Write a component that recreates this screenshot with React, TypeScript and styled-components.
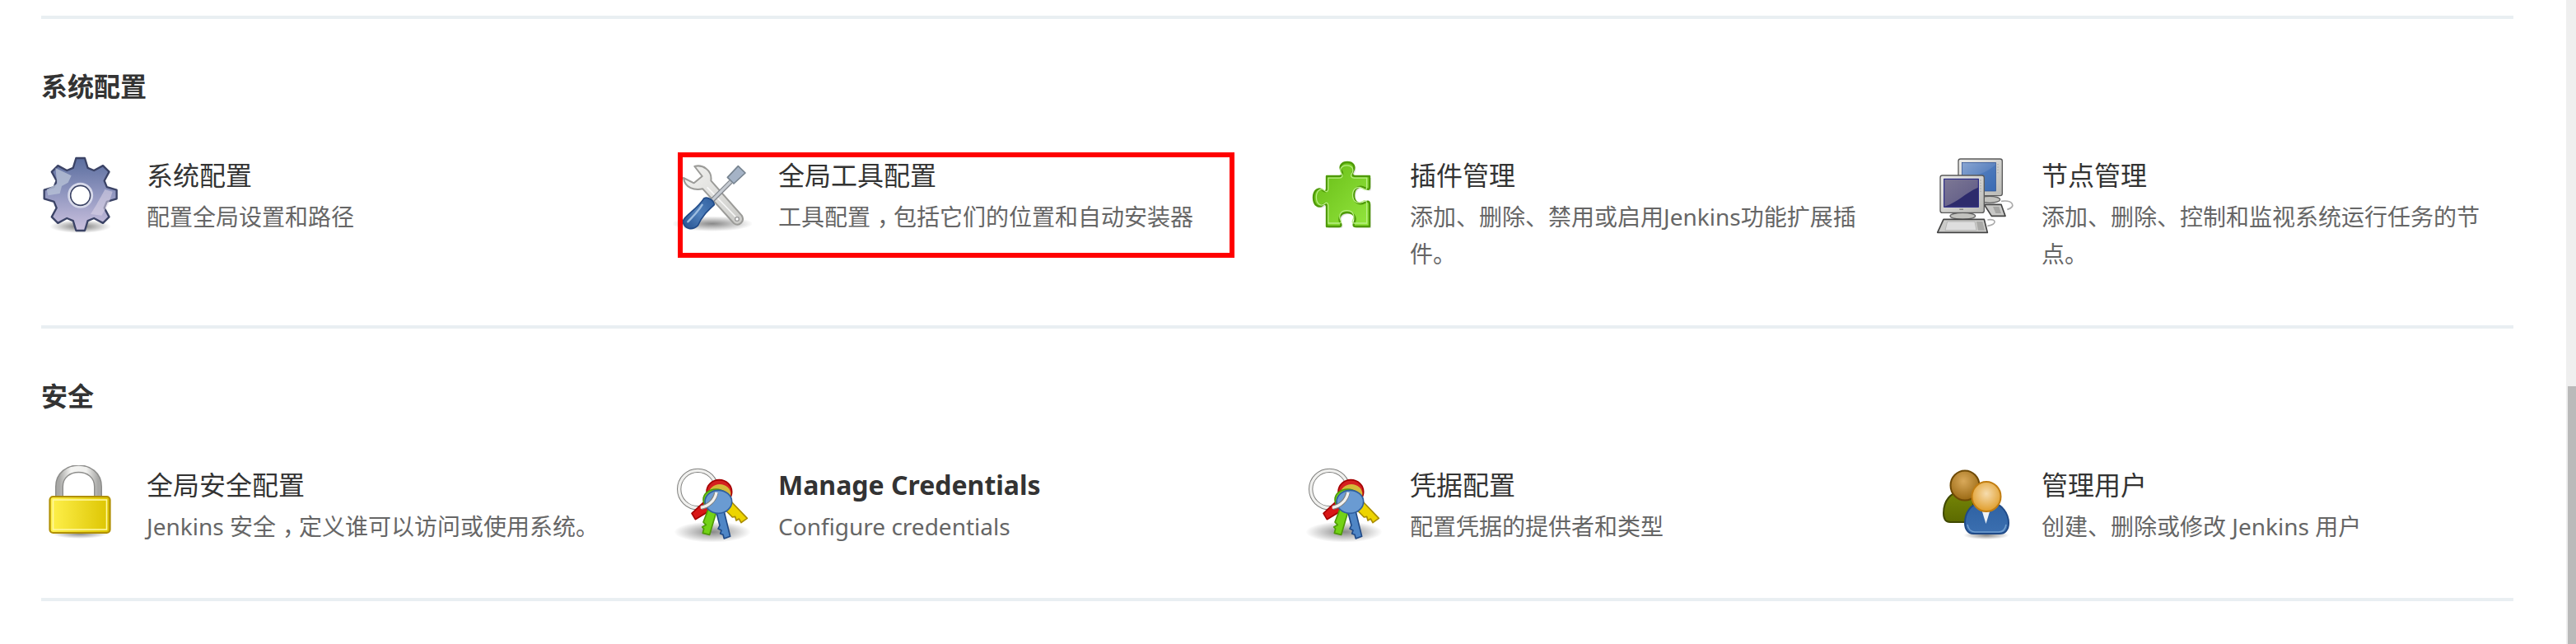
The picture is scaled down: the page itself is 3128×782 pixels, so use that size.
import React from "react";
import styled, { createGlobalStyle } from "styled-components";

const GlobalStyle = createGlobalStyle`
  html, body {
    margin: 0;
    padding: 0;
    background: #fff;
    overflow: hidden;
  }
  body {
    font-family: "Noto Sans", "Noto Sans CJK SC", sans-serif;
    color: #333;
  }
`;

const Page = styled.div`
  display: flex;
  width: 3128px;
  height: 782px;
  overflow: hidden;
`;

const Main = styled.main`
  flex: 1;
  min-width: 0;
  padding: 19px 64px 0 50px;
`;

const Sections = styled.div`
  border-top: 4px solid #e9eff2;
`;

const Section = styled.section`
  padding: 56px 0 64px;
  border-bottom: 4px solid #e9eff2;
`;

const SectionTitle = styled.h2`
  margin: 0 0 57px;
  font-size: 32px;
  line-height: 51px;
  font-weight: 700;
  color: #333;
`;

const Grid = styled.div`
  display: grid;
  grid-template-columns: repeat(4, 701px);
  column-gap: 66px;
`;

const Item = styled.a`
  position: relative;
  display: grid;
  grid-template-columns: 128px 1fr;
  padding-right: 23px;
`;

const IconBox = styled.div`
  width: 96px;
  height: 96px;
  margin-top: 2px;
  svg {
    display: block;
    width: 96px;
    height: 96px;
  }
`;

const ItemTitle = styled.div<{ $latin?: boolean }>`
  font-size: 32px;
  line-height: 51px;
  font-weight: ${({ $latin }) => ($latin ? 700 : 400)};
  color: #333;
`;

const ItemDesc = styled.div`
  margin-top: 3px;
  font-size: 28px;
  line-height: 45px;
  color: #666;
`;

// the comma sits in the middle of its cell in the reference's font
const FullComma = styled.span`
  padding-left: 8px;
  letter-spacing: -8px;
`;

const Highlight = styled.div`
  position: absolute;
  left: 6px;
  top: -2px;
  width: 676px;
  height: 128px;
  box-sizing: border-box;
  border: 6px solid #ff0000;
`;

const ScrollTrack = styled.div`
  flex: none;
  width: 12px;
  height: 782px;
  box-sizing: border-box;
  padding: 469px 0 0 2px;
  background: #efefef;
`;

const ScrollThumb = styled.div`
  height: 100%;
  background: #bababa;
`;

const gearPath = (cx: number, cy: number) => {
  const teeth = 8;
  const outer = 133;
  const root = 100;
  const pts: string[] = [];
  const pt = (r: number, a: number) =>
    `${(cx + r * Math.sin(a)).toFixed(1)} ${(cy - r * Math.cos(a)).toFixed(1)}`;
  for (let i = 0; i < teeth; i++) {
    const a = (i * 2 * Math.PI) / teeth;
    pts.push(pt(root, a - 0.27), pt(outer, a - 0.12), pt(outer, a + 0.12), pt(root, a + 0.27));
  }
  return `M${pts.join(" L")} Z`;
};

const GearIcon = () => (
  <svg viewBox="60 27 288 288">
    <defs>
      <radialGradient id="gearShadow">
        <stop offset="0" stopColor="#777" />
        <stop offset="1" stopColor="#777" stopOpacity="0" />
      </radialGradient>
      <linearGradient id="gearFill" x1="0" y1="0" x2="0" y2="1">
        <stop offset="0" stopColor="#5a6d9e" />
        <stop offset="0.45" stopColor="#8c93bd" />
        <stop offset="1" stopColor="#cbc1de" />
      </linearGradient>
    </defs>
    <ellipse cx="203" cy="285" rx="112" ry="24" fill="url(#gearShadow)" />
    <path d={gearPath(203, 168)} fill="url(#gearFill)" stroke="#3b4366" strokeWidth="7" strokeLinejoin="round" />
    <path
      d="M112 72 L170 100 L158 125 L135 138 L128 165 L85 172 L80 150 L118 130 Z"
      fill="#b6c0d6"
      opacity="0.8"
    />
    <path d="M262 205 C275 180 285 165 292 150 L320 158 L305 205 L280 245 L240 240 Z" fill="#dcd6e8" opacity="0.55" />
    <circle cx="203" cy="172" r="43" fill="#fff" stroke="#d6d8ea" strokeWidth="7" />
    <circle cx="203" cy="172" r="36" fill="#fff" stroke="#3b4366" strokeWidth="5" />
  </svg>
);

const ToolsIcon = () => (
  <svg viewBox="21 -3 288 288">
    <defs>
      <radialGradient id="toolsShadow">
        <stop offset="0" stopColor="#888" />
        <stop offset="1" stopColor="#888" stopOpacity="0" />
      </radialGradient>
      <linearGradient id="wrenchFill" x1="0" y1="0" x2="1" y2="1">
        <stop offset="0" stopColor="#f4f4f2" />
        <stop offset="1" stopColor="#c9c9c6" />
      </linearGradient>
      <linearGradient id="handleFill" x1="1" y1="0" x2="0" y2="1">
        <stop offset="0" stopColor="#2f5f9f" />
        <stop offset="0.5" stopColor="#4f7fba" />
        <stop offset="1" stopColor="#24508f" />
      </linearGradient>
    </defs>
    <ellipse cx="165" cy="245" rx="148" ry="28" fill="url(#toolsShadow)" />
    <path
      d="M100 36 C130 28 165 50 160 88 L272 215 C285 235 262 258 243 243 L130 118 C100 125 65 115 60 78 L98 97 L128 72 Z"
      fill="url(#wrenchFill)"
      stroke="#9b9b98"
      strokeWidth="6"
      strokeLinejoin="round"
    />
    <path d="M146 112 L250 220" stroke="#fff" strokeWidth="5" opacity="0.8" />
    <circle cx="255" cy="228" r="7" fill="#fff" stroke="#999" strokeWidth="4" />
    <path d="M232 92 L166 158" stroke="#80858c" strokeWidth="17" />
    <path d="M232 92 L166 158" stroke="#c6cbd2" strokeWidth="10" />
    <path
      d="M259 35 L285 60 L243 99 L220 76 Z"
      fill="#a5b3c6"
      stroke="#76838f"
      strokeWidth="5"
      strokeLinejoin="round"
    />
    <path
      d="M135 152 C150 146 170 160 172 176 C150 196 128 216 112 252 C92 270 66 266 58 240 C56 218 104 200 135 152 Z"
      fill="url(#handleFill)"
      stroke="#204a87"
      strokeWidth="5"
      strokeLinejoin="round"
    />
    <path d="M76 238 C90 222 110 205 128 176" stroke="#9dbde0" strokeWidth="7" fill="none" strokeLinecap="round" />
  </svg>
);

const PuzzleIcon = () => {
  const piece =
    "M25 25 H40 C44 25 45 22 43 19 C40 14 42 8 50 8 C58 8 60 14 57 19 C55 22 56 25 60 25 H77 V38 C77 42 74 41 71 39 C66 36 58 38 58 48 C58 58 66 60 71 57 C74 55 77 55 77 59 V86 H60 C56 86 58 82 59 80 C61 74 57 69 50 69 C43 69 39 74 41 80 C42 82 44 86 40 86 H25 V62 C25 58 22 58 20 60 C15 64 9 60 9 51 C9 42 15 38 20 42 C22 44 25 44 25 40 Z";
  return (
    <svg viewBox="-2 0 96 96">
      <defs>
        <linearGradient id="puzzleFill" x1="0" y1="0" x2="1" y2="1">
          <stop offset="0" stopColor="#66ba14" />
          <stop offset="1" stopColor="#93e63e" />
        </linearGradient>
      </defs>
      <path d={piece} transform="translate(2 2)" fill="#999" opacity="0.3" />
      <path d={piece} fill="url(#puzzleFill)" stroke="#4e9a06" strokeWidth="2.4" strokeLinejoin="round" />
      <path
        d={piece}
        fill="none"
        stroke="#b8ee84"
        strokeWidth="1.4"
        transform="translate(4.3 4.6) scale(0.9)"
      />
    </svg>
  );
};

const ComputersIcon = () => (
  <svg viewBox="3 12 288 288">
    <defs>
      <linearGradient id="caseFill" x1="0" y1="0" x2="1" y2="1">
        <stop offset="0" stopColor="#ececea" />
        <stop offset="1" stopColor="#b9b9b5" />
      </linearGradient>
      <linearGradient id="backScreen" x1="0" y1="0" x2="1" y2="1">
        <stop offset="0" stopColor="#8aa6d2" />
        <stop offset="1" stopColor="#3566b0" />
      </linearGradient>
      <linearGradient id="frontScreen" x1="0" y1="0" x2="1" y2="1">
        <stop offset="0" stopColor="#7d7895" />
        <stop offset="1" stopColor="#5b5784" />
      </linearGradient>
    </defs>
    <path d="M240 178 C285 172 295 200 262 208" fill="none" stroke="#aaa" strokeWidth="5" />
    <ellipse cx="198" cy="172" rx="38" ry="12" fill="#c2c2be" stroke="#666" strokeWidth="4" />
    <path d="M178 190 H240 L255 232 H205 Z" fill="#c8c8c6" stroke="#444" strokeWidth="5" strokeLinejoin="round" />
    <path d="M210 198 H232 L240 222 H220 Z" fill="#a5a5a3" />
    <rect x="84" y="24" width="160" height="134" rx="8" fill="url(#caseFill)" stroke="#5a5a5a" strokeWidth="4" />
    <rect x="97" y="37" width="123" height="104" fill="url(#backScreen)" stroke="#23468a" strokeWidth="2" />
    <path d="M97 100 C150 85 185 75 220 45 V140 H97 Z" fill="#3e6fb6" opacity="0.55" />
    <path d="M228 42 V80" stroke="#aaa" strokeWidth="4" strokeDasharray="4 6" />
    <path d="M190 246 C225 240 225 262 190 268" fill="none" stroke="#aaa" strokeWidth="5" />
    <ellipse cx="100" cy="232" rx="46" ry="12" fill="#c2c2be" stroke="#666" strokeWidth="4" />
    <path d="M30 244 H178 L190 292 H8 Z" fill="#cbcbc9" stroke="#444" strokeWidth="5" strokeLinejoin="round" />
    <path d="M44 252 H144 L150 284 H36 Z" fill="#dedede" stroke="#a8a8a6" strokeWidth="2" />
    <path d="M150 252 H172 L180 284 H156 Z" fill="#a9a9a7" />
    <rect x="18" y="84" width="160" height="136" rx="8" fill="url(#caseFill)" stroke="#5a5a5a" strokeWidth="4" />
    <rect x="32" y="97" width="125" height="102" fill="url(#frontScreen)" stroke="#16167e" strokeWidth="3" />
    <path d="M34 197 C85 180 105 150 156 128 V197 Z" fill="#2d2b6c" />
    <path d="M165 100 V145" stroke="#aaa" strokeWidth="4" strokeDasharray="4 6" />
    <rect x="88" y="206" width="14" height="3" fill="#666" />
  </svg>
);

const LockIcon = () => (
  <svg viewBox="0 0 96 96">
    <defs>
      <radialGradient id="lockShadow">
        <stop offset="0" stopColor="#888" />
        <stop offset="1" stopColor="#888" stopOpacity="0" />
      </radialGradient>
      <linearGradient id="lockBody" x1="0" y1="0" x2="1" y2="0">
        <stop offset="0" stopColor="#fff14d" />
        <stop offset="1" stopColor="#dcc400" />
      </linearGradient>
      <linearGradient id="shackle" x1="0" y1="0" x2="1" y2="0">
        <stop offset="0" stopColor="#a8a8a6" />
        <stop offset="0.3" stopColor="#f4f4f2" />
        <stop offset="0.7" stopColor="#f0f0ee" />
        <stop offset="1" stopColor="#a8a8a6" />
      </linearGradient>
    </defs>
    <ellipse cx="47" cy="83" rx="34" ry="6" fill="url(#lockShadow)" />
    <path d="M22 40 V26 C22 -3 69 -3 69 26 V40" fill="none" stroke="#8d8d8b" strokeWidth="10" />
    <path d="M22 40 V26 C22 -3 69 -3 69 26 V40" fill="none" stroke="url(#shackle)" strokeWidth="7" />
    <rect x="10.5" y="38" width="73" height="44" rx="4" fill="url(#lockBody)" stroke="#b08f00" strokeWidth="2.2" />
    <rect x="14.5" y="42" width="65" height="36" fill="none" stroke="#fff89e" strokeWidth="1.6" />
  </svg>
);

const KeysIcon = () => (
  <svg viewBox="21 15 288 288">
    <defs>
      <radialGradient id="keysShadow">
        <stop offset="0" stopColor="#888" />
        <stop offset="1" stopColor="#888" stopOpacity="0" />
      </radialGradient>
    </defs>
    <ellipse cx="165" cy="258" rx="140" ry="38" fill="url(#keysShadow)" />
    <circle cx="112" cy="102" r="68" fill="none" stroke="#7f7f7d" strokeWidth="16" />
    <circle cx="112" cy="102" r="68" fill="none" stroke="#f0f0ee" strokeWidth="10" />
    <path d="M135 148 L90 190 L103 212 L170 172 Z" fill="#d81616" stroke="#a40000" strokeWidth="5" strokeLinejoin="round" />
    <ellipse cx="190" cy="112" rx="46" ry="44" fill="#d42020" stroke="#a40000" strokeWidth="5" />
    <path
      d="M222 135 L292 208 L270 224 L262 210 L252 216 L248 202 L238 204 L200 165 Z"
      fill="#edd400"
      stroke="#a98c00"
      strokeWidth="5"
      strokeLinejoin="round"
    />
    <ellipse cx="192" cy="120" rx="40" ry="36" fill="#d4b93a" />
    <path
      d="M150 175 L178 190 L155 268 L130 262 L134 246 L128 240 L142 232 L132 222 Z"
      fill="#73d216"
      stroke="#4e9a06"
      strokeWidth="5"
      strokeLinejoin="round"
    />
    <ellipse cx="178" cy="140" rx="46" ry="38" fill="#73d216" stroke="#4e9a06" strokeWidth="5" />
    <path
      d="M178 180 L206 176 L230 274 L208 282 L204 268 L194 264 L198 252 L186 246 L192 234 Z"
      fill="#4f86c6"
      stroke="#204a87"
      strokeWidth="5"
      strokeLinejoin="round"
    />
    <ellipse cx="187" cy="148" rx="49" ry="42" fill="#6a9bd2" stroke="#2f5f9f" strokeWidth="5" />
    <path d="M124 169 A68 68 0 0 0 179 115" fill="none" stroke="#7f7f7d" strokeWidth="16" />
    <path d="M122 169 A68 68 0 0 0 180 113" fill="none" stroke="#f0f0ee" strokeWidth="10" />
  </svg>
);

const UsersIcon = () => (
  <svg viewBox="-3 0 96 96">
    <defs>
      <radialGradient id="backHead" cx="0.45" cy="0.35" r="0.7">
        <stop offset="0" stopColor="#d9a95a" />
        <stop offset="1" stopColor="#96650f" />
      </radialGradient>
      <radialGradient id="frontHead" cx="0.5" cy="0.4" r="0.6">
        <stop offset="0" stopColor="#f6dcae" />
        <stop offset="1" stopColor="#e09d2a" />
      </radialGradient>
      <linearGradient id="backBody" x1="0" y1="0" x2="0" y2="1">
        <stop offset="0" stopColor="#768607" />
        <stop offset="1" stopColor="#5c6a00" />
      </linearGradient>
      <linearGradient id="frontBody" x1="0" y1="0" x2="0" y2="1">
        <stop offset="0" stopColor="#2f62a3" />
        <stop offset="1" stopColor="#3b6fb0" />
      </linearGradient>
      <radialGradient id="usersShadow">
        <stop offset="0" stopColor="#888" />
        <stop offset="1" stopColor="#888" stopOpacity="0" />
      </radialGradient>
    </defs>
    <ellipse cx="58" cy="85" rx="28" ry="5" fill="url(#usersShadow)" />
    <path
      d="M6 58 C6 42 16 33 24 33 H34 C40 33 42 40 42 50 V69 H14 C8 69 6 64 6 58 Z"
      fill="url(#backBody)"
      stroke="#3f4800"
      strokeWidth="2"
    />
    <ellipse cx="32" cy="24.5" rx="17.5" ry="18" fill="url(#backHead)" stroke="#6f4a06" strokeWidth="2" />
    <path
      d="M32 70 C32 57 40 47 48 47 H68 C76 47 85 58 85 70 C85 78 81 83 74 83 H42 C36 83 32 78 32 70 Z"
      fill="url(#frontBody)"
      stroke="#204a87"
      strokeWidth="2"
    />
    <path d="M35 72 C36 78 40 81 44 81 H73 C78 81 81 78 82 72" fill="none" stroke="#729fcf" strokeWidth="1.6" />
    <path d="M51 50 H64 L57.5 71 Z" fill="#eef1f5" />
    <ellipse cx="58" cy="38" rx="17.5" ry="18" fill="url(#frontHead)" stroke="#c17d11" strokeWidth="2" />
  </svg>
);

interface Tool {
  icon: React.ReactNode;
  title: string;
  desc: React.ReactNode;
  latin?: boolean;
  marked?: boolean;
}

const systemTools: Tool[] = [
  { icon: <GearIcon />, title: "系统配置", desc: "配置全局设置和路径" },
  {
    icon: <ToolsIcon />,
    title: "全局工具配置",
    desc: (
      <>
        工具配置<FullComma>，</FullComma>包括它们的位置和自动安装器
      </>
    ),
    marked: true,
  },
  { icon: <PuzzleIcon />, title: "插件管理", desc: "添加、删除、禁用或启用Jenkins功能扩展插件。" },
  { icon: <ComputersIcon />, title: "节点管理", desc: "添加、删除、控制和监视系统运行任务的节点。" },
];

const securityTools: Tool[] = [
  {
    icon: <LockIcon />,
    title: "全局安全配置",
    desc: (
      <>
        Jenkins 安全<FullComma>，</FullComma>定义谁可以访问或使用系统。
      </>
    ),
  },
  { icon: <KeysIcon />, title: "Manage Credentials", desc: "Configure credentials", latin: true },
  { icon: <KeysIcon />, title: "凭据配置", desc: "配置凭据的提供者和类型" },
  { icon: <UsersIcon />, title: "管理用户", desc: "创建、删除或修改 Jenkins 用户" },
];

const ToolSection = ({ title, tools }: { title: string; tools: Tool[] }) => (
  <Section>
    <SectionTitle>{title}</SectionTitle>
    <Grid>
      {tools.map((tool) => (
        <Item key={tool.title}>
          <IconBox>{tool.icon}</IconBox>
          <div>
            <ItemTitle $latin={tool.latin}>{tool.title}</ItemTitle>
            <ItemDesc>{tool.desc}</ItemDesc>
          </div>
          {tool.marked && <Highlight />}
        </Item>
      ))}
    </Grid>
  </Section>
);

export default function App() {
  return (
    <Page>
      <GlobalStyle />
      <Main>
        <Sections>
          <ToolSection title="系统配置" tools={systemTools} />
          <ToolSection title="安全" tools={securityTools} />
        </Sections>
      </Main>
      <ScrollTrack>
        <ScrollThumb />
      </ScrollTrack>
    </Page>
  );
}
